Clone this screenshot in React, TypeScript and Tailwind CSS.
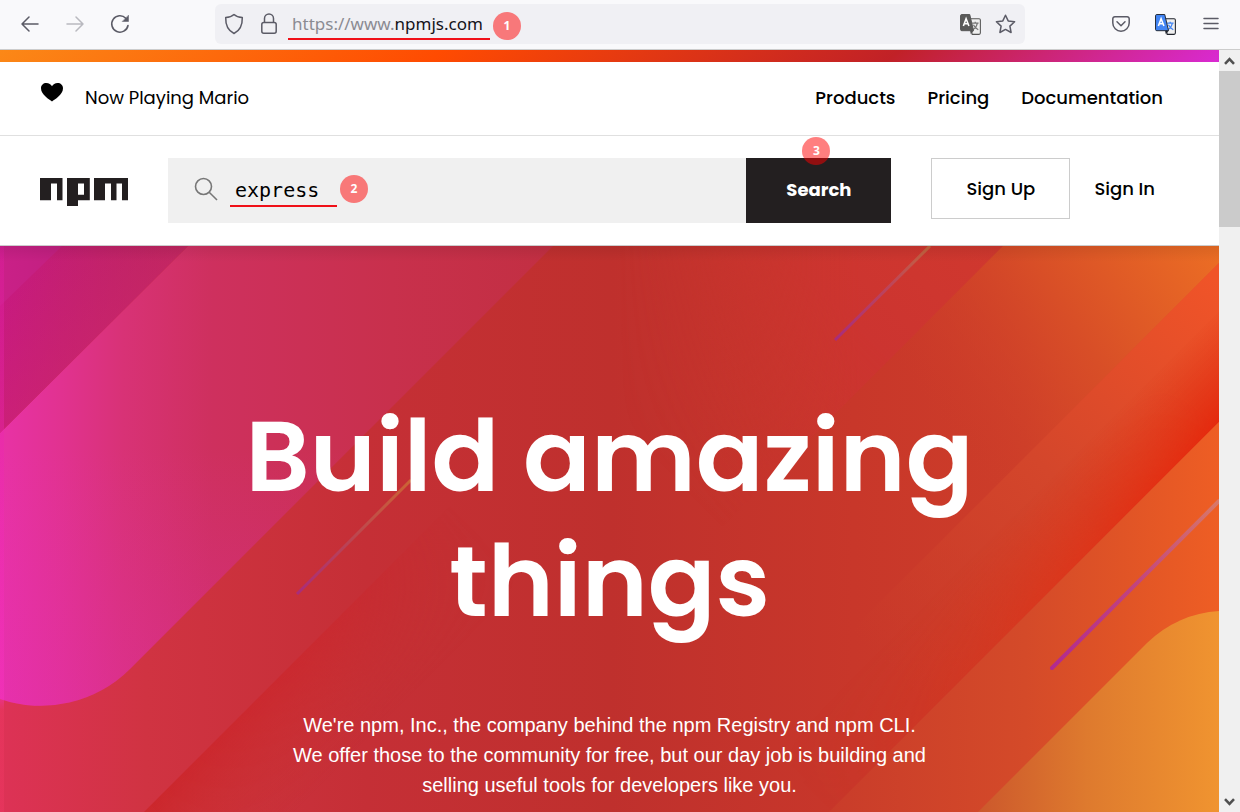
import type { ReactNode } from "react";

const brand = "font-['Poppins','Inter',sans-serif]";

function Badge({ n, className }: { n: number; className: string }) {
  return (
    <span
      className={`absolute flex size-7 items-center justify-center rounded-full bg-[#ff0000]/50 font-['Open_Sans',sans-serif] text-xs font-bold text-white ${className}`}
    >
      {n}
    </span>
  );
}

function ToolButton({ label, children }: { label: string; children: ReactNode }) {
  return (
    <button type="button" aria-label={label} className="flex h-10 w-[45px] items-center justify-center text-[#5b5b66]">
      {children}
    </button>
  );
}

function TranslateIcon({ color, dark, glyph }: { color: string; dark: string; glyph: string }) {
  return (
    <svg width="21" height="21" viewBox="0 0 20 20" fill="none">
      <path d="M9 4.6h9.2c.7 0 1.2.5 1.2 1.2v12.4c0 .7-.5 1.2-1.2 1.2h-6.6z" fill="#efefef" stroke={dark} strokeWidth="1" />
      <path d="M11.5 8.8h6.2M14.5 7.3v1.5M16.5 8.8c-.5 2.8-2 4.8-4 6M12.8 10.2c.8 2 2.4 3.7 4.6 4.8" stroke={glyph} strokeWidth="1.2" />
      <path d="M1.7.5h7.6l3.6 15.4H1.7C1 15.9.5 15.4.5 14.7V1.7C.5 1 1 .5 1.7.5z" fill={color} stroke={dark} strokeWidth="0.9" />
      <path d="M9.6 15.9h3.3l-2.6 3.5z" fill={dark} />
      <path d="M3.2 11.5 5.8 4.5 8.5 11.5M4.1 9.3h3.5" stroke="#fff" strokeWidth="1.5" />
    </svg>
  );
}

function BrowserBar() {
  return (
    <div className="flex shrink-0 items-center border-b border-[#cccccc] bg-[#f9f9fb] px-[7px] pt-1 pb-[5px]">
      <ToolButton label="Back">
        <svg width="18" height="16" viewBox="0 0 18 16" fill="none" stroke="currentColor" strokeWidth="1.5" strokeLinecap="round" strokeLinejoin="round">
          <path d="M17 8H1M8 1 1 8l7 7" />
        </svg>
      </ToolButton>
      <ToolButton label="Forward">
        <svg className="opacity-40" width="18" height="16" viewBox="0 0 18 16" fill="none" stroke="currentColor" strokeWidth="1.5" strokeLinecap="round" strokeLinejoin="round">
          <path d="M1 8h16M10 1l7 7-7 7" />
        </svg>
      </ToolButton>
      <ToolButton label="Reload">
        <svg width="20" height="20" viewBox="0 0 20 20" fill="none" stroke="currentColor" strokeWidth="1.6" strokeLinecap="round">
          <path d="M18 11.5A8.2 8.2 0 1 1 15.8 4.2" />
          <path d="M18.5 1.5v6h-6z" fill="currentColor" strokeWidth="0.5" strokeLinejoin="round" />
        </svg>
      </ToolButton>

      <div className="mr-[73px] ml-[73px] flex h-10 min-w-0 flex-1 items-center rounded-md bg-[#f0f0f4] pr-[9px] pl-[9px] text-[#5b5b66]">
        <svg width="20" height="22" viewBox="0 0 20 22" fill="none" stroke="currentColor" strokeWidth="1.5" strokeLinejoin="round">
          <path d="M10 1.5C12 3.4 15 4.4 18.3 4.6 18.5 11.5 16.5 17.5 10 20.5 3.5 17.5 1.5 11.5 1.7 4.6 5 4.4 8 3.4 10 1.5z" />
        </svg>
        <svg className="ml-[17px]" width="16" height="22" viewBox="0 0 16 22" fill="none" stroke="currentColor" strokeWidth="1.5">
          <rect x="0.8" y="9.5" width="14.4" height="10.7" rx="2" />
          <path d="M3.5 9.5V5.5a4.5 4.5 0 0 1 9 0v4" />
        </svg>
        <div className="relative ml-[11px] border-y-2 border-t-transparent border-b-[#f01018] pr-[7px] pl-1 text-[17px] leading-7 font-['Noto_Sans',sans-serif] text-[#8b8b92]">
          https://www.<span className="text-[#15141a]">npmjs.com</span>
          <Badge n={1} className="top-0.5 left-full ml-[3px]" />
        </div>
        <div className="ml-auto flex items-center gap-[14px]">
          <button type="button" aria-label="Translate this page">
            <TranslateIcon color="#5a5a5a" dark="#555555" glyph="#777777" />
          </button>
          <button type="button" aria-label="Bookmark this page">
            <svg width="21" height="20" viewBox="0 0 21 20" fill="none" stroke="currentColor" strokeWidth="1.5" strokeLinejoin="round">
              <path d="M10.5 1.2 13.2 6.9 19.6 7.7 14.9 12.1 16.1 18.5 10.5 15.4 4.9 18.5 6.1 12.1 1.4 7.7 7.8 6.9z" />
            </svg>
          </button>
        </div>
      </div>

      <ToolButton label="Save to Pocket">
        <svg width="18" height="16" viewBox="0 0 18 16" fill="none" stroke="currentColor" strokeWidth="1.5" strokeLinecap="round" strokeLinejoin="round">
          <path d="M2.8.8h12.4a2 2 0 0 1 2 2v4.2a8.2 8.2 0 0 1-16.4 0V2.8a2 2 0 0 1 2-2z" />
          <path d="M5 5.8l4 3.9 4-3.9" />
        </svg>
      </ToolButton>
      <ToolButton label="Translate">
        <TranslateIcon color="#4285f4" dark="#20242c" glyph="#4285f4" />
      </ToolButton>
      <ToolButton label="Open menu">
        <svg width="16" height="14" viewBox="0 0 16 14" fill="none" stroke="currentColor" strokeWidth="1.5" strokeLinecap="round">
          <path d="M1 1.5h14M1 6.5h14M1 11.5h14" />
        </svg>
      </ToolButton>
    </div>
  );
}

function Scrollbar() {
  return (
    <div className="flex w-[21px] shrink-0 flex-col bg-[#f0f0f0]">
      <div className="flex h-[21px] items-center justify-center">
        <svg width="11" height="8" viewBox="0 0 11 8" fill="none" stroke="#505050" strokeWidth="2.6">
          <path d="M1 6.8 5.5 2.2 10 6.8" />
        </svg>
      </div>
      <div className="flex-1">
        <div className="h-[156px] bg-[#cbcbcb]" />
      </div>
      <div className="flex h-[21px] items-center justify-center">
        <svg width="11" height="8" viewBox="0 0 11 8" fill="none" stroke="#505050" strokeWidth="2.6">
          <path d="M1 1.2 5.5 5.8 10 1.2" />
        </svg>
      </div>
    </div>
  );
}

function HeroArt() {
  return (
    <svg className="absolute inset-0 h-full w-full" viewBox="0 0 1219 566" preserveAspectRatio="none" aria-hidden="true">
      <defs>
        <linearGradient id="base" gradientUnits="userSpaceOnUse" x1="0" y1="0" x2="1219" y2="0">
          <stop offset="0" stopColor="#dd3256" />
          <stop offset="0.12" stopColor="#d03342" />
          <stop offset="0.3" stopColor="#c52f36" />
          <stop offset="0.5" stopColor="#bf302d" />
          <stop offset="0.7" stopColor="#c8372a" />
          <stop offset="0.84" stopColor="#cd3d29" />
          <stop offset="1" stopColor="#e45428" />
        </linearGradient>
        <linearGradient id="pill" gradientUnits="userSpaceOnUse" x1="0" y1="0" x2="560" y2="0">
          <stop offset="0" stopColor="#e832a6" />
          <stop offset="0.11" stopColor="#e13290" />
          <stop offset="0.22" stopColor="#d83276" />
          <stop offset="0.38" stopColor="#ce305e" />
          <stop offset="0.7" stopColor="#c8304c" />
          <stop offset="1" stopColor="#c22f42" />
        </linearGradient>
        <linearGradient id="pillGlow" gradientUnits="userSpaceOnUse" x1="0" y1="200" x2="0" y2="460">
          <stop offset="0" stopColor="#e42cc0" stopOpacity="0" />
          <stop offset="1" stopColor="#e42cc0" stopOpacity="0.3" />
        </linearGradient>
        <linearGradient id="corner" gradientUnits="userSpaceOnUse" x1="0" y1="0" x2="190" y2="0">
          <stop offset="0" stopColor="#c81a80" />
          <stop offset="1" stopColor="#b92658" />
        </linearGradient>
        <linearGradient id="cornerFade" gradientUnits="userSpaceOnUse" x1="30" y1="30" x2="94" y2="94">
          <stop offset="0" stopColor="#d0286c" stopOpacity="0" />
          <stop offset="1" stopColor="#d0286c" stopOpacity="0.4" />
        </linearGradient>
        <linearGradient id="tip" gradientUnits="userSpaceOnUse" x1="0" y1="0" x2="60" y2="0">
          <stop offset="0" stopColor="#ca2088" />
          <stop offset="1" stopColor="#c22080" />
        </linearGradient>
        <linearGradient id="edge" gradientUnits="userSpaceOnUse" x1="0" y1="0" x2="0" y2="566">
          <stop offset="0" stopColor="#e01ca0" stopOpacity="0.4" />
          <stop offset="0.8" stopColor="#fc32c4" stopOpacity="0.4" />
          <stop offset="0.82" stopColor="#f03864" stopOpacity="0.4" />
        </linearGradient>
        <linearGradient id="band" gradientUnits="userSpaceOnUse" x1="355" y1="355" x2="430" y2="430">
          <stop offset="0" stopColor="#cb262a" stopOpacity="0.9" />
          <stop offset="1" stopColor="#c8342e" stopOpacity="0" />
        </linearGradient>
        <linearGradient id="bandMask" gradientUnits="userSpaceOnUse" x1="144" y1="566" x2="450" y2="260">
          <stop offset="0" stopColor="#fff" />
          <stop offset="0.5" stopColor="#fff" stopOpacity="0.7" />
          <stop offset="1" stopColor="#fff" stopOpacity="0" />
        </linearGradient>
        <mask id="bandFade" maskUnits="userSpaceOnUse" x="0" y="0" width="1219" height="566">
          <rect width="1219" height="566" fill="url(#bandMask)" />
        </mask>
        <linearGradient id="rose" gradientUnits="userSpaceOnUse" x1="720" y1="280" x2="1000" y2="0">
          <stop offset="0" stopColor="#cc3430" stopOpacity="0" />
          <stop offset="0.6" stopColor="#cc3430" />
          <stop offset="1" stopColor="#d0382e" />
        </linearGradient>
        <linearGradient id="roseSide" gradientUnits="userSpaceOnUse" x1="620" y1="0" x2="860" y2="0">
          <stop offset="0" stopColor="#fff" stopOpacity="0" />
          <stop offset="1" stopColor="#fff" />
        </linearGradient>
        <mask id="roseFade" maskUnits="userSpaceOnUse" x="0" y="0" width="1219" height="566">
          <rect width="1219" height="566" fill="url(#roseSide)" />
        </mask>
        <linearGradient id="orangeTop" gradientUnits="userSpaceOnUse" x1="940" y1="180" x2="1219" y2="0">
          <stop offset="0" stopColor="#cc3c2a" stopOpacity="0" />
          <stop offset="0.5" stopColor="#d84e27" />
          <stop offset="1" stopColor="#ec6e24" />
        </linearGradient>
        <linearGradient id="glow" gradientUnits="userSpaceOnUse" x1="860" y1="396" x2="1219" y2="37">
          <stop offset="0" stopColor="#cc402a" stopOpacity="0" />
          <stop offset="0.5" stopColor="#d4462b" />
          <stop offset="1" stopColor="#f05428" />
        </linearGradient>
        <linearGradient id="red" gradientUnits="userSpaceOnUse" x1="1090" y1="193" x2="1146" y2="249">
          <stop offset="0" stopColor="#e02c10" stopOpacity="0" />
          <stop offset="1" stopColor="#e42a0e" />
        </linearGradient>
        <linearGradient id="redMask" gradientUnits="userSpaceOnUse" x1="830" y1="566" x2="1219" y2="177">
          <stop offset="0" stopColor="#fff" stopOpacity="0" />
          <stop offset="0.4" stopColor="#fff" stopOpacity="0.25" />
          <stop offset="0.7" stopColor="#fff" stopOpacity="0.6" />
          <stop offset="1" stopColor="#fff" />
        </linearGradient>
        <mask id="redFade" maskUnits="userSpaceOnUse" x="0" y="0" width="1219" height="566">
          <rect width="1219" height="566" fill="url(#redMask)" />
        </mask>
        <linearGradient id="lower" gradientUnits="userSpaceOnUse" x1="830" y1="0" x2="1219" y2="0">
          <stop offset="0" stopColor="#c93c2a" />
          <stop offset="0.5" stopColor="#d44a29" />
          <stop offset="0.75" stopColor="#e05426" />
          <stop offset="1" stopColor="#ee5e24" />
        </linearGradient>
        <linearGradient id="amber" gradientUnits="userSpaceOnUse" x1="978" y1="0" x2="1219" y2="0">
          <stop offset="0" stopColor="#cc582c" />
          <stop offset="0.45" stopColor="#de7a2e" />
          <stop offset="1" stopColor="#f09430" />
        </linearGradient>
        <linearGradient id="ray1" gradientUnits="userSpaceOnUse" x1="297" y1="348" x2="411" y2="234">
          <stop offset="0" stopColor="#a82c7c" />
          <stop offset="0.5" stopColor="#bc4650" />
          <stop offset="1" stopColor="#cc6434" />
        </linearGradient>
        <linearGradient id="ray2" gradientUnits="userSpaceOnUse" x1="835" y1="94" x2="930" y2="0">
          <stop offset="0" stopColor="#a82c7c" />
          <stop offset="0.6" stopColor="#be4658" />
          <stop offset="1" stopColor="#c4663c" />
        </linearGradient>
        <linearGradient id="ray3" gradientUnits="userSpaceOnUse" x1="1051" y1="423" x2="1219" y2="255">
          <stop offset="0" stopColor="#b02a90" />
          <stop offset="0.5" stopColor="#c04480" />
          <stop offset="1" stopColor="#d87868" />
        </linearGradient>
        <linearGradient id="shade" x1="0" y1="0" x2="0" y2="1">
          <stop offset="0" stopColor="#000" stopOpacity="0.08" />
          <stop offset="1" stopColor="#000" stopOpacity="0" />
        </linearGradient>
      </defs>
      <rect width="1219" height="566" fill="url(#base)" />
      <path d="M144 566 710 0h300L444 566z" fill="url(#band)" mask="url(#bandFade)" />
      <path d="M600 0H1003L720 283H600z" fill="url(#rose)" mask="url(#roseFade)" />
      <path d="M0 187 188 0H553L130 423A126 126 0 0 1 0 453z" fill="url(#pill)" />
      <path d="M0 187 188 0H553L130 423A126 126 0 0 1 0 453z" fill="url(#pillGlow)" />
      <path d="M0 0H188L0 187z" fill="url(#corner)" />
      <path d="M0 0H188L0 187z" fill="url(#cornerFade)" />
      <path d="M0 0H62L0 60z" fill="url(#tip)" />
      <path d="M0 0H4V566H0z" fill="url(#edge)" />
      <path d="M1003 0H1219V17L950 286 760 243z" fill="url(#orangeTop)" />
      <path d="M1219 17V176L829 566H670z" fill="url(#glow)" />
      <path d="M1219 17V176L829 566H670z" fill="url(#red)" mask="url(#redFade)" />
      <path d="M1219 176V566H829z" fill="url(#lower)" />
      <path d="M978 566 1147 397A111 111 0 0 1 1219 365V566z" fill="url(#amber)" />
      <path d="M297 348 411 234" stroke="url(#ray1)" strokeWidth="3" />
      <path d="M835 94 930 0" stroke="url(#ray2)" strokeWidth="3" />
      <path d="M1052 422 1219 255" stroke="url(#ray3)" strokeWidth="4" strokeLinecap="round" />
      <rect width="1219" height="16" fill="url(#shade)" />
    </svg>
  );
}

function SiteHeader() {
  return (
    <header className={`bg-white text-lg text-black ${brand}`}>
      <div className="h-3 bg-[linear-gradient(139deg,#fb8817,#ff4b01_36%,#c12127_73%,#d92ad2)]" />
      <div className="flex h-[74px] items-center border-b border-[#e0e0e0] pr-14 pb-px pl-10">
        <div className="flex items-center gap-[21px]">
          <svg width="24" height="32" viewBox="0 0 24 32" aria-hidden="true">
            <path d="M12 19.5C9.5 17.5 1 13 1 6.3 1 3 3.4 1 6.3 1 8.9 1 11 2.3 12 4.3 13 2.3 15 1 17.6 1 20.5 1 23 3 23 6.3 23 13 14.5 17.5 12 19.5z" />
          </svg>
          <span>Now Playing Mario</span>
        </div>
        <nav className="ml-auto flex gap-8 font-medium">
          <a href="#products">Products</a>
          <a href="#pricing">Pricing</a>
          <a href="#documentation">Documentation</a>
        </nav>
      </div>
      <div className="flex items-start border-b border-[#cccccc] py-[22px] pr-16 pl-10">
        <a href="#home" aria-label="npm" className="mt-5 mr-10">
          <svg width="88" height="28" viewBox="0 0 88 28" fill="#231f20">
            <path fillRule="evenodd" d="M0 0h22.500v22.300H17V5.500H11v16.800H0zM27 0h22.800v22.300H38V28H27zM38 5.500v11.300h6V5.500zM54 0h34v22.300h-6V5.500h-5.500v16.800H71V5.500H65v16.800H54z" />
          </svg>
        </a>
        <form className="flex h-[65px] min-w-0 flex-1" onSubmit={(e) => e.preventDefault()}>
          <div className="relative flex min-w-0 flex-1 items-center bg-[#f0f0f0] pb-[3px] pl-[26px]">
            <svg width="24" height="24" viewBox="0 0 24 24" fill="none" stroke="#777777" strokeWidth="1.6" aria-hidden="true">
              <circle cx="9.5" cy="9.5" r="8" />
              <path d="M15.2 15.3 23 23" />
            </svg>
            <input
              type="text"
              aria-label="Search packages"
              defaultValue="express"
              className="ml-3 h-9 w-[107px] border-b-2 border-[#f01018] bg-transparent px-[5px] pt-1 font-['DejaVu_Sans_Mono',monospace] text-xl text-black outline-none"
            />
            <Badge n={2} className="top-[17px] left-[172px]" />
          </div>
          <button type="submit" className="relative w-[145px] bg-[#231f20] pb-px font-bold text-white">
            Search
            <Badge n={3} className="-top-[21px] left-14" />
          </button>
        </form>
        <a href="#signup" className="ml-10 flex h-[61px] w-[139px] items-center justify-center border border-[#cccccc] font-medium">
          Sign Up
        </a>
        <a href="#signin" className="ml-6 flex h-[61px] items-center font-medium">
          Sign In
        </a>
      </div>
    </header>
  );
}

export default function App() {
  return (
    <div className="flex h-screen flex-col overflow-hidden">
      <BrowserBar />
      <div className="flex min-h-0 flex-1">
        <div className="flex min-w-0 flex-1 flex-col overflow-hidden">
          <SiteHeader />
          <main className="relative flex-1 text-center text-white">
            <HeroArt />
            <div className="relative px-10 pt-[148px]">
              <h1 className={`mx-auto max-w-[860px] text-[100px] leading-[125px] font-semibold ${brand}`}>Build amazing things</h1>
              <p className="mx-auto mt-[66px] max-w-[640px] font-['Liberation_Sans',sans-serif] text-xl leading-[30px]">
                We're npm, Inc., the company behind the npm Registry and npm CLI. We offer those to the community for free, but our day job is building and
                selling useful tools for developers like you.
              </p>
            </div>
          </main>
        </div>
        <Scrollbar />
      </div>
    </div>
  );
}
